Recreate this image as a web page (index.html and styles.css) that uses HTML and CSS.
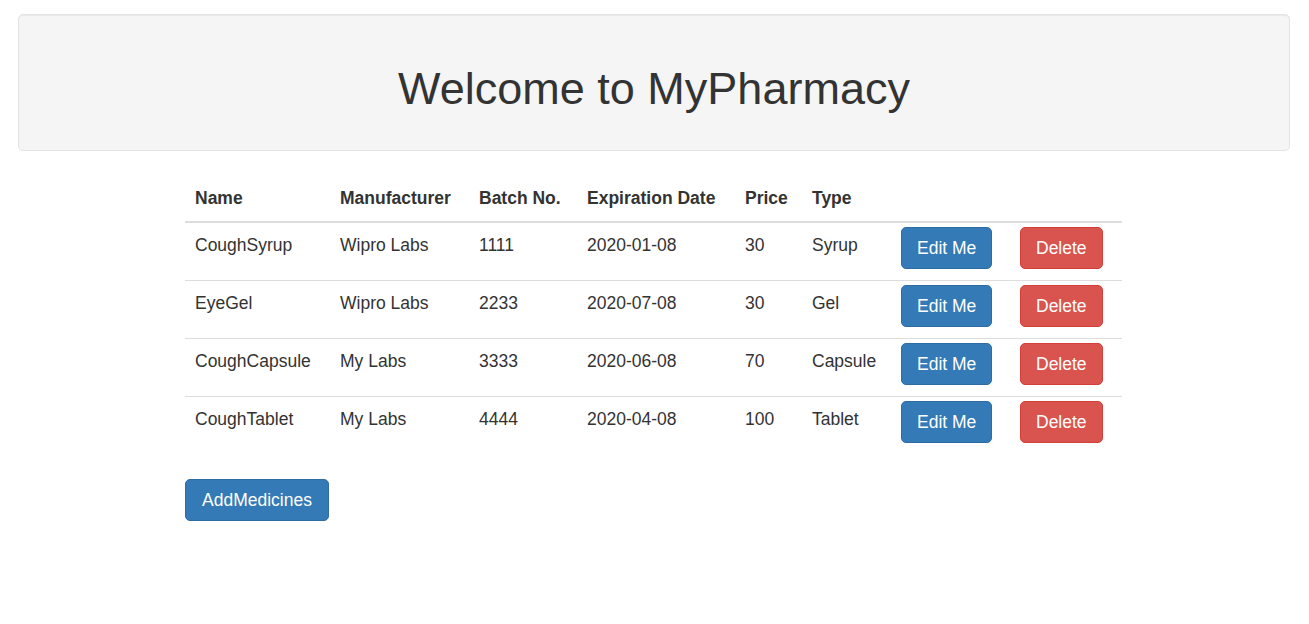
FILE: index.html
```html
<!DOCTYPE html>
<html>
<head>
<meta charset="utf-8">
<title>MyPharmacy</title>
<link rel="stylesheet" href="styles.css">
</head>
<body>
<div class="page">
  <div class="well">
    <h1 class="title">Welcome to MyPharmacy</h1>
  </div>
  <div class="content">
    <table class="meds">
      <thead>
        <tr>
          <th class="c-name">Name</th>
          <th class="c-man">Manufacturer</th>
          <th class="c-batch">Batch No.</th>
          <th class="c-exp">Expiration Date</th>
          <th class="c-price">Price</th>
          <th class="c-type">Type</th>
          <th class="c-edit"></th>
          <th class="c-del"></th>
        </tr>
      </thead>
      <tbody>
        <tr>
          <td>CoughSyrup</td><td>Wipro Labs</td><td>1111</td><td>2020-01-08</td><td>30</td><td>Syrup</td>
          <td class="act"><button class="btn btn-primary">Edit Me</button></td>
          <td class="act"><button class="btn btn-danger">Delete</button></td>
        </tr>
        <tr>
          <td>EyeGel</td><td>Wipro Labs</td><td>2233</td><td>2020-07-08</td><td>30</td><td>Gel</td>
          <td class="act"><button class="btn btn-primary">Edit Me</button></td>
          <td class="act"><button class="btn btn-danger">Delete</button></td>
        </tr>
        <tr>
          <td>CoughCapsule</td><td>My Labs</td><td>3333</td><td>2020-06-08</td><td>70</td><td>Capsule</td>
          <td class="act"><button class="btn btn-primary">Edit Me</button></td>
          <td class="act"><button class="btn btn-danger">Delete</button></td>
        </tr>
        <tr>
          <td>CoughTablet</td><td>My Labs</td><td>4444</td><td>2020-04-08</td><td>100</td><td>Tablet</td>
          <td class="act"><button class="btn btn-primary">Edit Me</button></td>
          <td class="act"><button class="btn btn-danger">Delete</button></td>
        </tr>
      </tbody>
    </table>
    <div class="actions">
      <button class="btn btn-primary btn-add">AddMedicines</button>
    </div>
  </div>
</div>
</body>
</html>
```

FILE: styles.css
```css
* { box-sizing: border-box; }
html, body { margin: 0; padding: 0; background: #fff; }
body {
  font-family: "Liberation Sans", Arial, Helvetica, sans-serif;
  font-size: 17.5px;
  line-height: 25px;
  color: #333;
}
.page { padding: 14px 19px 0 18px; }
.well {
  background: #f5f5f5;
  border: 1px solid #e3e3e3;
  border-radius: 5px;
  box-shadow: inset 0 1px 1px rgba(0,0,0,0.05);
  padding: 24px;
  margin-bottom: 25px;
}
.title {
  margin: 25px 0 13px;
  font-size: 45px;
  line-height: 49px;
  font-weight: normal;
  text-align: center;
  color: #333;
}
.content { width: 937px; margin: 0 0 0 167px; }
.meds {
  width: 937px;
  table-layout: fixed;
  border-collapse: collapse;
  border-spacing: 0;
  margin-bottom: 25px;
}
.meds th {
  text-align: left;
  font-weight: bold;
  padding: 10px;
  line-height: 25px;
  border-bottom: 2px solid #ddd;
  vertical-align: bottom;
}
.meds td {
  padding: 10px;
  line-height: 25px;
  vertical-align: top;
}
.meds tbody tr + tr td { border-top: 1px solid #ddd; }
.meds td.act { padding: 4px 10px 11px; }
.c-name { width: 145px; }
.c-man { width: 139px; }
.c-batch { width: 108px; }
.c-exp { width: 158px; }
.c-price { width: 67px; }
.c-type { width: 89px; }
.c-edit { width: 119px; }
.c-del { width: 112px; }
.btn {
  display: inline-block;
  font-family: "Liberation Sans", Arial, Helvetica, sans-serif;
  font-size: 17.5px;
  line-height: 25px;
  padding: 7.5px 15px;
  border: 1px solid transparent;
  border-radius: 5px;
  color: #fff;
  cursor: pointer;
  white-space: nowrap;
  vertical-align: top;
}
.btn-add { padding: 7.5px 16px; }
.btn-primary { background: #337ab7; border-color: #2e6da4; }
.btn-danger { background: #d9534f; border-color: #d43f3a; }
.actions { display: flex; }
```
